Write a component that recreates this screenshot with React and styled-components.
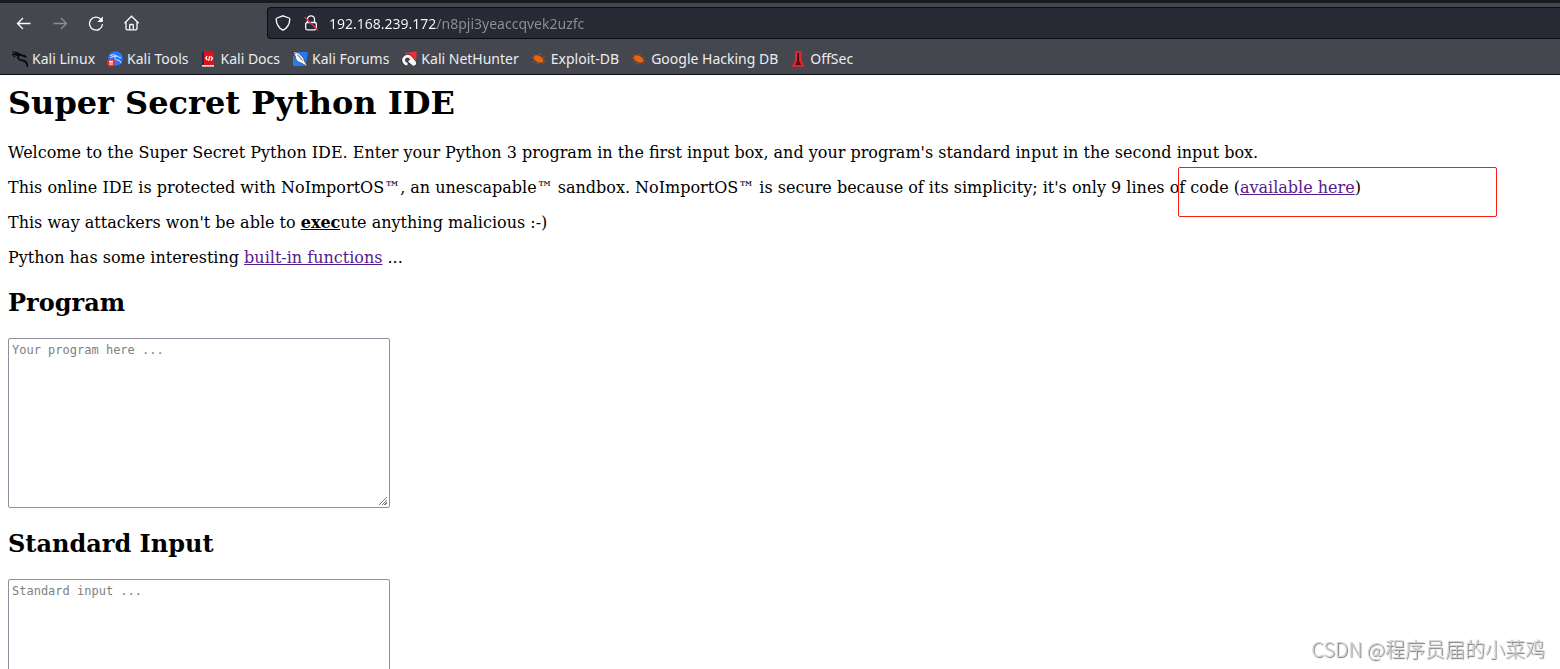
import React from "react";
import styled, { createGlobalStyle } from "styled-components";

const bookmarks = [
  { label: "Kali Linux", icon: DragonIcon },
  { label: "Kali Tools", icon: ToolsIcon },
  { label: "Kali Docs", icon: DocsIcon },
  { label: "Kali Forums", icon: ForumsIcon },
  { label: "Kali NetHunter", icon: NetHunterIcon },
  { label: "Exploit-DB", icon: BugIcon },
  { label: "Google Hacking DB", icon: BugIcon },
  { label: "OffSec", icon: OffSecIcon },
];

export default function App() {
  return (
    <Browser>
      <GlobalStyle />
      <TabStrip />
      <Toolbar>
        <NavButtons>
          <NavButton aria-label="Back">
            <BackIcon />
          </NavButton>
          <NavButton aria-label="Forward" disabled>
            <BackIcon flip />
          </NavButton>
          <NavButton aria-label="Reload">
            <ReloadIcon />
          </NavButton>
          <NavButton aria-label="Home">
            <HomeIcon />
          </NavButton>
        </NavButtons>
        <AddressBar>
          <ShieldIcon />
          <LockIcon />
          <AddressInput
            type="text"
            aria-label="Address"
            defaultValue="192.168.239.172/n8pji3yeaccqvek2uzfc"
            spellCheck={false}
          />
        </AddressBar>
      </Toolbar>
      <Bookmarks>
        {bookmarks.map(({ label, icon: Icon }) => (
          <Bookmark href="#" key={label}>
            <Icon />
            {label}
          </Bookmark>
        ))}
      </Bookmarks>
      <Page>
        <Title>Super Secret Python IDE</Title>
        <Text>
          Welcome to the Super Secret Python IDE. Enter your Python 3 program in the first input
          box, and your program's standard input in the second input box.
        </Text>
        <Text>
          This online IDE is protected with NoImportOS™, an unescapable™ sandbox. NoImportOS™ is
          secure because of its simplicity; it's only 9 lines of code (
          <Marked>
            <PageLink href="#">available here</PageLink>
            <Marker />
          </Marked>
          )
        </Text>
        <Text>
          This way attackers won't be able to <Exec>exec</Exec>ute anything malicious :-)
        </Text>
        <Text>
          Python has some interesting <PageLink href="#">built-in functions</PageLink> ...
        </Text>
        <Heading>
          <label htmlFor="program">Program</label>
        </Heading>
        <CodeBox id="program" placeholder="Your program here ..." />
        <Heading>
          <label htmlFor="stdin">Standard Input</label>
        </Heading>
        <CodeBox id="stdin" placeholder="Standard input ..." />
      </Page>
      <Watermark>CSDN @程序员届的小菜鸡</Watermark>
    </Browser>
  );
}

function BackIcon({ flip }) {
  return (
    <Glyph viewBox="0 0 16 16">
      <path
        d={flip ? "M1.5 8.500h13M9 3 14.5 8.500 9 14" : "M14.5 8.500h-13M7 3 1.5 8.500 7 14"}
      />
    </Glyph>
  );
}

function ReloadIcon() {
  return (
    <Glyph viewBox="0 0 16 16">
      <path d="M13.2 4.7A6.5 6.5 0 1 0 14.5 9.1" />
      <path d="M14.8 1.500v5.4H9.4z" fill="currentColor" stroke="none" />
    </Glyph>
  );
}

function HomeIcon() {
  return (
    <Glyph viewBox="0 0 16 16">
      <path d="M.5 8.3 7.500 1.2l7.2 7.1M2 7v6.5c0 .8.5 1.3 1.3 1.3h8.4c.8 0 1.3-.5 1.3-1.3V7" />
      <path d="M5.700 14.5v-4.2c0-.5.3-.8.8-.8h2c.5 0 .8.3.8.8v4.2" />
    </Glyph>
  );
}

function ShieldIcon() {
  return (
    <Glyph viewBox="0 0 16 16">
      <path d="M8 .8 14 3c.5.2.8.6.8 1.1-.2 5-2 8.8-6.8 11.1C3.2 12.9 1.4 9.1 1.2 4.1c0-.5.3-.9.8-1.1z" />
    </Glyph>
  );
}

function LockIcon() {
  return (
    <Glyph viewBox="0 0 16 16">
      <path d="M4.5 7V4.3a3.500 3.500 0 0 1 7 0V7" />
      <rect x="2.7" y="7.5" width="10.6" height="7.3" rx="1.5" />
      <path d="M1.5 2 14.800 15.2" stroke="#e22850" />
    </Glyph>
  );
}

function DragonIcon() {
  return (
    <Glyph viewBox="0 0 16 16">
      <g stroke="#050608" strokeLinecap="round">
        <path d="M.5.8C4 1 7 2 9.500 4.200" strokeWidth="1" />
        <path d="M.5 3.800C4 2.400 7.500 3 10 4.500l3.500 1.200" strokeWidth="1.700" />
        <path d="M1.500 6C3.500 4.400 6 4 8 4.300" strokeWidth="1" />
        <path d="M7.500 4C5 6.500 6 9 10 9.300c3.500.2 5.200 2.200 5.500 6" strokeWidth="1.700" />
        <path d="M11 4.200l2 .3 1 1.800" strokeWidth="1" />
      </g>
    </Glyph>
  );
}

function ToolsIcon() {
  return (
    <Glyph viewBox="0 0 16 16">
      <circle cx="8.5" cy="7.5" r="7.3" fill="#2777ff" stroke="none" />
      <g stroke="#dfeaff" strokeWidth="1">
        <path d="M3 4.5c3-1.3 6-.5 8.5 1.5l2.5.8" />
        <path d="M3 7c2.500-1.800 4.500-1.800 6.500-1.500M8.500 5.500c-1.500 2 0 3.300 2 3.500 2.200.3 3.200 1.500 3.500 3.300" />
      </g>
      <circle cx="4" cy="11.8" r="4" fill="#ee2a33" stroke="none" />
      <path d="M2 10.300h4M3.200 10.300v3.700M5 10.300v3.700" stroke="#fff" strokeWidth="1" />
    </Glyph>
  );
}

function DocsIcon() {
  return (
    <Glyph viewBox="0 0 16 16">
      <g stroke="none">
        <path d="M1 1h2v14H1z" fill="#202a52" />
        <path d="M3 .5h10v13.800H3z" fill="#df1218" />
        <path d="M1 14h12v1.700H1z" fill="#e5d8da" />
      </g>
      <path d="M6 5 4.800 7.300 6.500 9M10 5.500l1.500 1.800-1.700 2.200M8.800 5 7.500 9.800" stroke="#fff" />
    </Glyph>
  );
}

function ForumsIcon() {
  return (
    <Glyph viewBox="0 0 16 16">
      <path d="M1 1h15l-2.500 14H1z" fill="#257bf4" stroke="none" />
      <path d="M1 .5 6.500 2l5 5 .800 3 3.500 5.500-5.800-3L4.800 10 2.800 5z" fill="#f5f6f8" stroke="#15181f" strokeWidth=".5" />
      <path d="M5.500 3.500l5 6M.5 1.500l3 1.500M.8 4l3 1.500" stroke="#15181f" strokeWidth=".7" />
    </Glyph>
  );
}

function NetHunterIcon() {
  return (
    <Glyph viewBox="0 0 16 16">
      <path d="M3.500 2.200 15.700.3l-.7 11.700z" fill="#ef2e3d" stroke="none" />
      <path d="M6.500 13.200C3.200 12.500 1.700 9.800 3 7.300c1.600-2.700 5-2.700 7-.3l3.600 4.500c.6 1.300-.3 2-1.500 1.500L8 9.500" stroke="#17191c" strokeWidth="4" />
      <path d="M6.500 13.200C3.200 12.500 1.700 9.800 3 7.300c1.600-2.700 5-2.700 7-.3l3.600 4.500c.6 1.300-.3 2-1.500 1.500L8 9.500" stroke="#f7f7f7" strokeWidth="3" />
    </Glyph>
  );
}

function BugIcon() {
  return (
    <Glyph viewBox="0 0 16 16">
      <ellipse cx="7.5" cy="8" rx="5.300" ry="3.200" transform="rotate(28 7.500 8)" fill="#ee620b" stroke="none" />
      <path
        d="M4.500 5.500 2.500 2.800M7.500 5 8 2.800l2.500.4M11 7l3-1.200M12 9.500l3 .5M11.500 11l1.500 2M8 11l-1 2-3-.2M5 9.500 1.500 11M4 7 .8 6.800"
        stroke="#b5561a"
        strokeWidth=".7"
      />
    </Glyph>
  );
}

function OffSecIcon() {
  return (
    <Glyph viewBox="0 0 16 16">
      <path d="M5 .3h6.500v9.200l3 6.200h-13L5 9.500z" fill="#e3262d" stroke="none" />
      <path d="M7.300 2h1.700v8l2.200 4h-6l2.100-4z" fill="#350c10" stroke="none" />
      <path d="M8.200 11v3.500" stroke="#9d171d" strokeWidth=".8" />
    </Glyph>
  );
}

const GlobalStyle = createGlobalStyle`
  body {
    margin: 0;
    background: #fff;
  }
`;

const Browser = styled.div`
  display: flex;
  flex-direction: column;
  height: 100vh;
`;

const Glyph = styled.svg`
  flex: none;
  width: 16px;
  height: 16px;
  fill: none;
  stroke: currentColor;
  stroke-width: 1.3;
`;

const TabStrip = styled.div`
  flex: none;
  height: 3px;
  background: #191a1f;
`;

const Toolbar = styled.div`
  flex: none;
  display: flex;
  align-items: center;
  height: 40px;
  padding-left: 6px;
  background: #44474d;
  color: #fbfbfe;
`;

const NavButtons = styled.div`
  display: flex;
  width: 261px;
`;

const NavButton = styled.button`
  display: flex;
  align-items: center;
  justify-content: center;
  width: 36px;
  height: 32px;
  padding: 0;
  border: none;
  background: none;
  color: inherit;
  &:disabled {
    opacity: 0.4;
  }
`;

const AddressBar = styled.div`
  flex: 1;
  display: flex;
  align-items: center;
  gap: 12px;
  height: 30px;
  padding-left: 7px;
  border: 1px solid #0c0d12;
  border-right: none;
  border-radius: 4px 0 0 4px;
  background: #272935;
`;

/* the host part is brighter than the path */
const AddressInput = styled.input`
  flex: 1;
  min-width: 0;
  padding: 0;
  margin-left: -2px;
  border: none;
  outline: none;
  background: linear-gradient(to right, #fbfbfe 108px, #8f9097 108px);
  background-clip: text;
  color: transparent;
  font: 14px "Noto Sans", sans-serif;
`;

const Bookmarks = styled.nav`
  flex: none;
  display: flex;
  align-items: center;
  gap: 12px;
  height: 31px;
  padding-left: 12px;
  border-bottom: 1px solid #0c0d12;
  background: #44474d;
`;

const Bookmark = styled.a`
  display: flex;
  align-items: center;
  gap: 4px;
  color: #ececf0;
  font: 14px "Noto Sans", sans-serif;
  text-decoration: none;
  white-space: nowrap;
`;

const Page = styled.main`
  flex: 1;
  min-height: 0;
  padding: 9px 8px;
  overflow: auto;
  scrollbar-width: none;
  color: #000;
  font: 16px/19px "DejaVu Serif", serif;
`;

const Title = styled.h1`
  margin: 0 0 20px;
  font-size: 32px;
  line-height: 39px;
`;

const Text = styled.p`
  margin: 16px 0;
`;

const Heading = styled.h2`
  margin: 21px 0;
  font-size: 24px;
  line-height: 29px;
`;

const PageLink = styled.a`
  color: #551a8b;
`;

const Exec = styled.b`
  text-decoration: underline;
`;

const Marked = styled.span`
  position: relative;
`;

const Marker = styled.span`
  position: absolute;
  top: -11px;
  left: -62px;
  width: 317px;
  height: 48px;
  border: 1px solid #fb1d13;
  border-radius: 2px;
  pointer-events: none;
`;

const CodeBox = styled.textarea`
  display: block;
  box-sizing: border-box;
  width: 382px;
  height: 170px;
  padding: 4px 3px;
  border: 1px solid #8f8f9d;
  border-radius: 2px;
  font: 12px/14px "DejaVu Sans Mono", monospace;
  &::placeholder {
    color: #808080;
  }
  &::-webkit-resizer {
    background: repeating-linear-gradient(135deg, #777 0 1px, #fff 1px 2px) no-repeat 3px 3px / 10px 10px;
    clip-path: polygon(100% 0, 100% 100%, 0 100%);
    background-image: linear-gradient(135deg, #fff 50%, transparent 50%),
      repeating-linear-gradient(135deg, #777 0 1px, #fff 1px 2px);
  }
`;

const Watermark = styled.div`
  position: fixed;
  right: 15px;
  bottom: 5px;
  color: #d2d2d2;
  font: 300 20px/30px "Noto Sans CJK SC", sans-serif;
  text-shadow: 1px 1px 1px #777;
`;
